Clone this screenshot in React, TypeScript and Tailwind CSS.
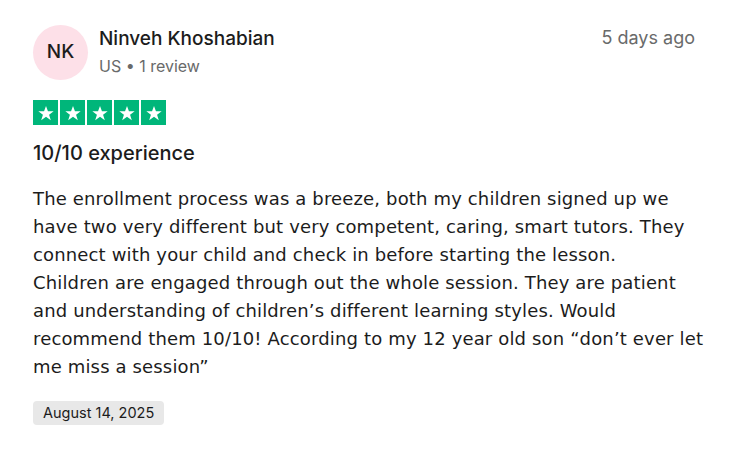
import React from "react";

function Star() {
  return (
    <span className="flex h-[25px] w-[25px] items-center justify-center bg-[#00b67a]">
      <svg viewBox="0 0 24 24" className="h-[18px] w-[18px]" fill="#fff">
        <path d="M12 2.5l2.6 7.2h7.6l-6.1 4.5 2.3 7.3L12 17l-6.4 4.5 2.3-7.3-6.1-4.5h7.6z" />
      </svg>
    </span>
  );
}

// line breaks kept as in the original card
const body = [
  "The enrollment process was a breeze, both my children signed up we",
  "have two very different but very competent, caring, smart tutors. They",
  "connect with your child and check in before starting the lesson.",
  "Children are engaged through out the whole session. They are patient",
  "and understanding of children’s different learning styles. Would",
  "recommend them 10/10! According to my 12 year old son “don’t ever let",
  "me miss a session”",
];

export default function App() {
  return (
    <div
      className="h-[453px] w-[739px] bg-white pl-[33px] pr-[44px] pt-[25px] text-[#1c1c1c]"
      style={{ fontFamily: "Inter, 'Noto Sans', sans-serif" }}
    >
      {/* header */}
      <div className="flex items-start justify-between">
        <div className="flex items-start gap-[11px]">
          <div className="flex h-[55px] w-[55px] items-center justify-center rounded-full bg-[#fde0e8] text-[19px] font-medium">
            NK
          </div>
          <div className="pt-[1px]">
            <div className="text-[19px] font-medium leading-[26px]">Ninveh Khoshabian</div>
            <div className="mt-[3px] text-[16px] leading-[22px] text-[#696a6a]">US • 1 review</div>
          </div>
        </div>
        <div className="pt-[1px] text-[18px] leading-[24px] text-[#696a6a]">5 days ago</div>
      </div>

      {/* rating */}
      <div className="mt-[20px] flex gap-[2px]">
        <Star />
        <Star />
        <Star />
        <Star />
        <Star />
      </div>

      <h2 className="mt-[14px] text-[20px] font-medium leading-[28px]">10/10 experience</h2>

      <p
        className="mt-[18px] w-[690px] whitespace-nowrap text-[18px] leading-[28px] tracking-[0.15px]"
        style={{ fontFamily: "'DejaVu Sans', sans-serif" }}
      >
        {body.map((line, i) => (
          <span key={i} className="block">
            {line}
          </span>
        ))}
      </p>

      <div className="mt-[20px] inline-block rounded-[4px] bg-[#e8e8e8] px-[10px] text-[14.5px] leading-[24px]">
        August 14, 2025
      </div>
    </div>
  );
}
